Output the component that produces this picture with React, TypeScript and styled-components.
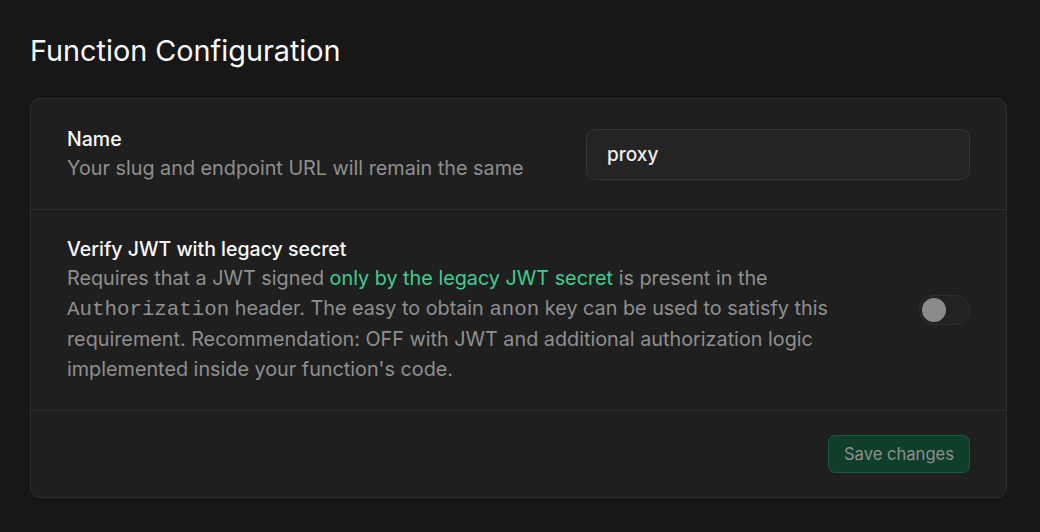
import React from "react";
import styled, { createGlobalStyle } from "styled-components";

const GlobalStyle = createGlobalStyle`
  html, body { margin: 0; padding: 0; background: #171717; }
  body { font-family: Inter, "Noto Sans", sans-serif; -webkit-font-smoothing: antialiased; }
  * { box-sizing: border-box; }
`;

const Page = styled.div`
  width: 1040px;
  height: 532px;
  background: #171717;
  padding: 32px 33px 0 30px;
`;

const Heading = styled.h1`
  margin: 0 0 28px;
  font-size: 28.8px;
  line-height: 38px;
  font-weight: 400;
  color: #fafafa;
`;

const Card = styled.section`
  background: #1f1f1f;
  border: 1px solid #2e2e2e;
  border-radius: 10px;
  overflow: hidden;
`;

const Row = styled.div<{ $pad: string }>`
  display: flex;
  align-items: center;
  justify-content: space-between;
  gap: 40px;
  padding: ${(p) => p.$pad};
  border-bottom: 1px solid #2e2e2e;
`;

const Info = styled.div`
  display: flex;
  flex-direction: column;
`;

const Title = styled.div`
  font-size: 19.5px;
  line-height: 28px;
  font-weight: 500;
  color: #fafafa;
`;

const Desc = styled.div`
  font-size: 19.8px;
  line-height: 30.5px;
  color: #8f8f8f;
  white-space: nowrap;
`;

const Link = styled.span`
  color: #3ecf8e;
`;

const Mono = styled.code`
  font-family: "Liberation Mono", "DejaVu Sans Mono", monospace;
  font-size: 20.8px;
  line-height: 1;
  color: #909090;
`;

const Input = styled.div`
  width: 384px;
  height: 51px;
  display: flex;
  align-items: center;
  padding: 0 20px;
  background: #242424;
  border: 1px solid #363636;
  border-radius: 9px;
  font-size: 19px;
  font-weight: 500;
  color: #ededed;
`;

const Toggle = styled.div`
  width: 51px;
  height: 30px;
  border-radius: 15px;
  background: #222222;
  border: 1px solid #2e2e2e;
  display: flex;
  align-items: center;
  padding: 0 2px;
  flex-shrink: 0;
`;

const Knob = styled.div`
  width: 24px;
  height: 24px;
  border-radius: 50%;
  background: #8b8b8b;
`;

const Footer = styled.div`
  display: flex;
  justify-content: flex-end;
  padding: 24px 36px 24px 37px;
`;

const Button = styled.button`
  height: 38px;
  padding: 0 15px;
  background: #0f3f2a;
  border: 1px solid #1b5a3b;
  border-radius: 7px;
  font-family: inherit;
  font-size: 16.6px;
  color: #8f8f8f;
`;

export default function App() {
  return (
    <>
      <GlobalStyle />
      <Page>
        <Heading>Function Configuration</Heading>
        <Card>
          <Row $pad="26px 36px 25px 36px">
            <Info>
              <Title>Name</Title>
              <Desc>Your slug and endpoint URL will remain the same</Desc>
            </Info>
            <Input>proxy</Input>
          </Row>
          <Row $pad="25px 36px 25px 36px">
            <Info>
              <Title>Verify JWT with legacy secret</Title>
              <Desc>
                Requires that a JWT signed <Link>only by the legacy JWT secret</Link> is present in the
                <br />
                <Mono>Authorization</Mono> header. The easy to obtain <Mono>anon</Mono> key can be used to satisfy this
                <br />
                requirement. Recommendation: OFF with JWT and additional authorization logic
                <br />
                implemented inside your function's code.
              </Desc>
            </Info>
            <Toggle>
              <Knob />
            </Toggle>
          </Row>
          <Footer>
            <Button>Save changes</Button>
          </Footer>
        </Card>
      </Page>
    </>
  );
}
